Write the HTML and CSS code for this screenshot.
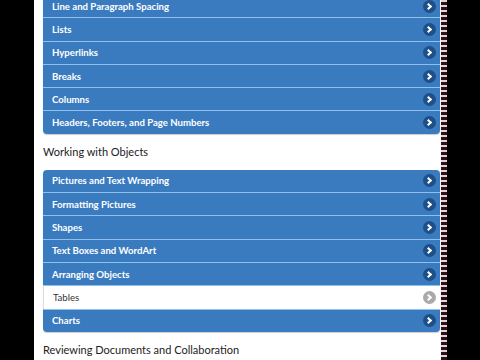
FILE: index.html
```html
<!DOCTYPE html>
<html lang="en">
  <head>
    <meta charset="UTF-8" />
    <meta name="viewport" content="width=device-width, initial-scale=1.0" />
    <link rel="stylesheet" href="styles.css">
    <title>Word Topics</title>
  </head>

  <body>
    <div class="frame">
      <div class="page">
        <ul class="topics first">
          <li class="topic">Line and Paragraph Spacing<span class="go"></span></li>
          <li class="topic">Lists<span class="go"></span></li>
          <li class="topic">Hyperlinks<span class="go"></span></li>
          <li class="topic">Breaks<span class="go"></span></li>
          <li class="topic">Columns<span class="go"></span></li>
          <li class="topic">Headers, Footers, and Page Numbers<span class="go"></span></li>
        </ul>

        <h3 class="section">Working with Objects</h3>
        <ul class="topics">
          <li class="topic">Pictures and Text Wrapping<span class="go"></span></li>
          <li class="topic">Formatting Pictures<span class="go"></span></li>
          <li class="topic">Shapes<span class="go"></span></li>
          <li class="topic">Text Boxes and WordArt<span class="go"></span></li>
          <li class="topic">Arranging Objects<span class="go"></span></li>
          <li class="topic current">Tables<span class="go"></span></li>
          <li class="topic">Charts<span class="go"></span></li>
        </ul>

        <h3 class="section">Reviewing Documents and Collaboration</h3>
      </div>
      <div class="strip"></div>
    </div>
  </body>
</html>
```

FILE: styles.css
```css
body {
  margin: 0;
  background-color: #000;
  height: 360px;
  overflow: hidden;
  font-family: Lato, "Open Sans", Arial, sans-serif;
}

.frame {
  display: flex;
  margin-left: 34px;
  width: 413px;
  height: 360px;
}

.page {
  background-color: #fff;
  width: 407px;
  padding: 0 1px 0 9px;
  box-sizing: border-box;
  margin-top: -5px;
}

.strip {
  width: 6px;
  background: repeating-linear-gradient(to bottom, #e6d2d8 0 2px, #2a1218 2px 5px);
}

.topics {
  list-style: none;
  margin: 0;
  padding: 0;
  border-radius: 4px;
  overflow: hidden;
  box-shadow: 0 1px 1px rgba(0, 0, 0, 0.2);
}

.topic {
  display: flex;
  align-items: center;
  justify-content: space-between;
  height: 22.3px;
  padding: 0 4px 0 9px;
  background-color: #3a7bbf;
  border-top: 1px solid #8ec0ec;
  color: #fff;
  font-size: 9.6px;
  font-weight: bold;
}

.topic:first-child {
  border-top: none;
}

.topic.current {
  background-color: #fff;
  color: #333;
  font-weight: normal;
  border-left: 1px solid #ddd;
}

.go {
  width: 13px;
  height: 13px;
  border-radius: 50%;
  background-color: #1e4f88;
  position: relative;
}

.go::after {
  content: "";
  position: absolute;
  left: 3px;
  top: 4px;
  width: 3px;
  height: 3px;
  border-top: 2px solid #fff;
  border-right: 2px solid #fff;
  transform: rotate(45deg);
}

.current .go {
  background-color: #aaa;
}

.section {
  margin: 0;
  padding: 11px 0 11px;
  font-size: 11px;
  line-height: 14px;
  font-weight: normal;
  color: #222;
}
```
